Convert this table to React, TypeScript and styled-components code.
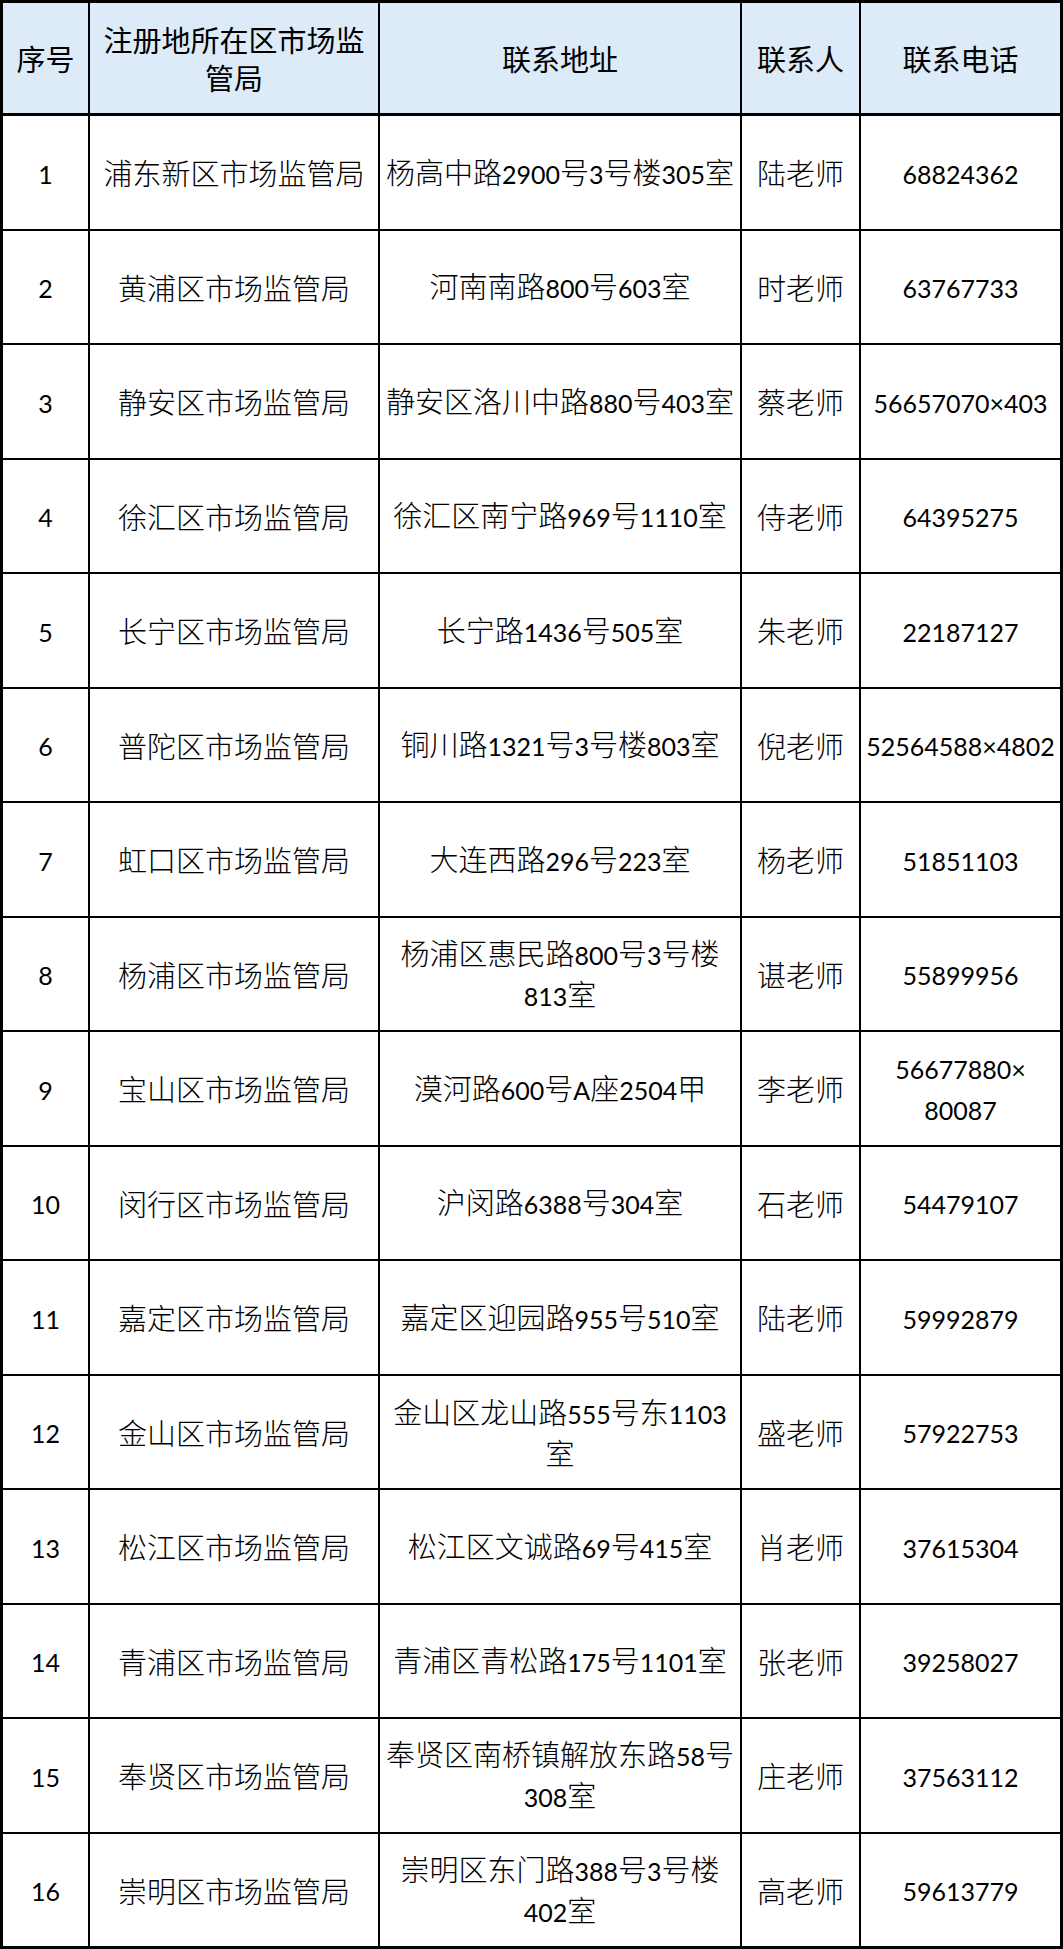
import React from 'react';
import styled, { createGlobalStyle } from 'styled-components';

const GlobalStyle = createGlobalStyle`
    html, body {
        margin: 0;
        padding: 0;
        background: #ffffff;
    }
    body {
        font-family: "Noto Sans CJK SC", "Noto Sans", sans-serif;
        color: #000000;
    }
`

/**
 * DATA
 */

const headers = ['序号', '注册地所在区市场监\n管局', '联系地址', '联系人', '联系电话'];

const rows: string[][] = [
    ['1', '浦东新区市场监管局', '杨高中路2900号3号楼305室', '陆老师', '68824362'],
    ['2', '黄浦区市场监管局', '河南南路800号603室', '时老师', '63767733'],
    ['3', '静安区市场监管局', '静安区洛川中路880号403室', '蔡老师', '56657070×403'],
    ['4', '徐汇区市场监管局', '徐汇区南宁路969号1110室', '侍老师', '64395275'],
    ['5', '长宁区市场监管局', '长宁路1436号505室', '朱老师', '22187127'],
    ['6', '普陀区市场监管局', '铜川路1321号3号楼803室', '倪老师', '52564588×4802'],
    ['7', '虹口区市场监管局', '大连西路296号223室', '杨老师', '51851103'],
    ['8', '杨浦区市场监管局', '杨浦区惠民路800号3号楼\n813室', '谌老师', '55899956'],
    ['9', '宝山区市场监管局', '漠河路600号A座2504甲', '李老师', '56677880×\n80087'],
    ['10', '闵行区市场监管局', '沪闵路6388号304室', '石老师', '54479107'],
    ['11', '嘉定区市场监管局', '嘉定区迎园路955号510室', '陆老师', '59992879'],
    ['12', '金山区市场监管局', '金山区龙山路555号东1103\n室', '盛老师', '57922753'],
    ['13', '松江区市场监管局', '松江区文诚路69号415室', '肖老师', '37615304'],
    ['14', '青浦区市场监管局', '青浦区青松路175号1101室', '张老师', '39258027'],
    ['15', '奉贤区市场监管局', '奉贤区南桥镇解放东路58号\n308室', '庄老师', '37563112'],
    ['16', '崇明区市场监管局', '崇明区东门路388号3号楼\n402室', '高老师', '59613779'],
];

/**
 * TABLE
 */

const Table = styled('div')`
    display: grid;
    grid-template-columns: 85px 288px 360px 117px 199px;
    grid-template-rows: 111px repeat(16, 1fr);
    gap: 2px;
    padding: 3px;
    width: 1063px;
    height: 1949px;
    box-sizing: border-box;
    background: #000000;
`

const Cell = styled('div')<{ $head?: boolean }>`
    display: flex;
    align-items: center;
    justify-content: center;
    text-align: center;
    white-space: pre;
    overflow: hidden;
    font-size: 29px;
    line-height: 38px;
    font-weight: ${p => (p.$head ? 400 : 300)};
    background: ${p => (p.$head ? '#dcebf7' : '#ffffff')};
    margin-bottom: ${p => (p.$head ? '1px' : '0')};
`

const Latin = styled('span')`
    font-family: Lato, "Liberation Sans", sans-serif;
    font-size: 25px;
    font-weight: 400;
`

function CellText({ text }: { text: string }) {
    const parts = text.split(/([0-9A-Za-z×]+)/);
    return (
        <>
            {parts.map((part, i) =>
                /^[0-9A-Za-z×]+$/.test(part) ? <Latin key={i}>{part}</Latin> : part
            )}
        </>
    );
}

export default function App() {
    return (
        <>
            <GlobalStyle />
            <Table>
                {headers.map(h => (
                    <Cell $head key={h}>{h}</Cell>
                ))}
                {rows.map(row =>
                    row.map((value, i) => (
                        <Cell key={row[0] + '-' + i}>
                            <div><CellText text={value} /></div>
                        </Cell>
                    ))
                )}
            </Table>
        </>
    );
}
